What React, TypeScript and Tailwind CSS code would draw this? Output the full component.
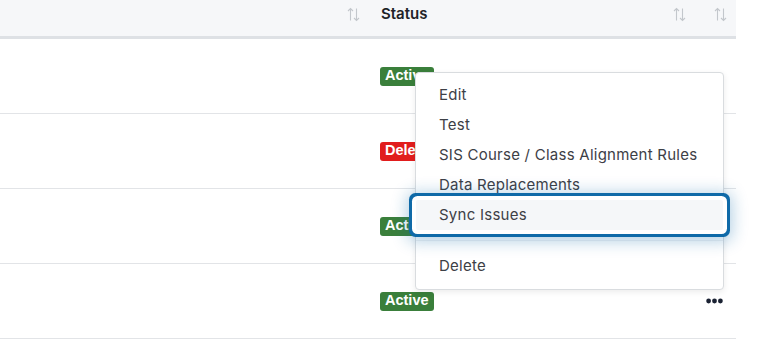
const rows = [
  { status: "Active" },
  { status: "Deleted" },
  { status: "Active" },
  { status: "Active" },
];

function SortIcon() {
  return (
    <svg width="13" height="15" viewBox="0 0 13 15" fill="none" stroke="#c3c7cc" strokeWidth="1.1">
      <path d="M3.5 13.5V1.5M1 4l2.5-2.5L6 4" />
      <path d="M9.5 1.5v12M7 11l2.5 2.5L12 11" />
    </svg>
  );
}

function Dots() {
  return (
    <svg width="17" height="6" viewBox="0 0 17 6" fill="#1b2233">
      <circle cx="2.6" cy="3" r="2.4" />
      <circle cx="8.5" cy="3" r="2.4" />
      <circle cx="14.4" cy="3" r="2.4" />
    </svg>
  );
}

function Badge({ status }: { status: string }) {
  const active = status === "Active";
  return (
    <span
      className={`inline-flex items-center h-[19px] px-[5px] rounded-[3px] text-white text-[14.5px] font-bold font-['Liberation_Sans',Arial,sans-serif] ${
        active ? "bg-[#3a7f3b]" : "bg-[#e11d1d]"
      }`}
    >
      {status}
    </span>
  );
}

const menuItems = ["Edit", "Test", "SIS Course / Class Alignment Rules", "Data Replacements", "Sync Issues"];

export default function App() {
  return (
    <div className="relative w-[768px] h-[348px] bg-white overflow-hidden font-['Inter',sans-serif] text-[#2b2f36]">
      <div className="w-[736px]">
        {/* header */}
        <div className="flex h-[39px] pb-[8px] bg-[#f6f7f9] border-b-[3px] border-[#dee1e5]">
          <div className="w-[370px] flex items-center justify-end pr-[10px]">
            <SortIcon />
          </div>
          <div className="w-[327px] flex items-center justify-between pl-[11px] pr-[11px]">
            <span className="text-[15px] font-semibold text-[#1f2328]">Status</span>
            <SortIcon />
          </div>
          <div className="flex-1 flex items-center justify-end pr-[9px]">
            <SortIcon />
          </div>
        </div>

        {/* rows */}
        {rows.map((r, i) => (
          <div key={i} className="flex h-[75px] border-b border-[#e2e4e7]">
            <div className="w-[370px]" />
            <div className="w-[327px] flex items-center pl-[10px]">
              <Badge status={r.status} />
            </div>
            <div className="flex-1 flex items-center justify-end pr-[13px]">
              <Dots />
            </div>
          </div>
        ))}
      </div>

      {/* dropdown menu */}
      <div className="absolute left-[415px] top-[72px] w-[309px] bg-white border border-[#d9dcdf] rounded-[4px] shadow-[0_2px_6px_rgba(0,0,0,0.08)] pt-[7px] pb-[8px] z-20">
        {menuItems.map((item) => {
          const focused = item === "Sync Issues";
          return (
            <div
              key={item}
              className={`relative h-[30px] flex items-center px-[23px] text-[15px] tracking-[0.25px] text-[#3d4046] ${
                focused
                  ? "z-10 bg-[#f5f7f9] rounded-[2px] ring-[3px] ring-[#0f6aa8] ring-offset-[4px] ring-offset-white shadow-[0_2px_16px_9px_rgba(15,106,168,0.32)]"
                  : ""
              }`}
            >
              {item}
            </div>
          );
        })}
        <div className="my-[10px] border-t border-[#f1f2f4]" />
        <div className="h-[30px] flex items-center px-[23px] text-[15px] tracking-[0.25px] text-[#3d4046]">Delete</div>
      </div>
    </div>
  );
}
